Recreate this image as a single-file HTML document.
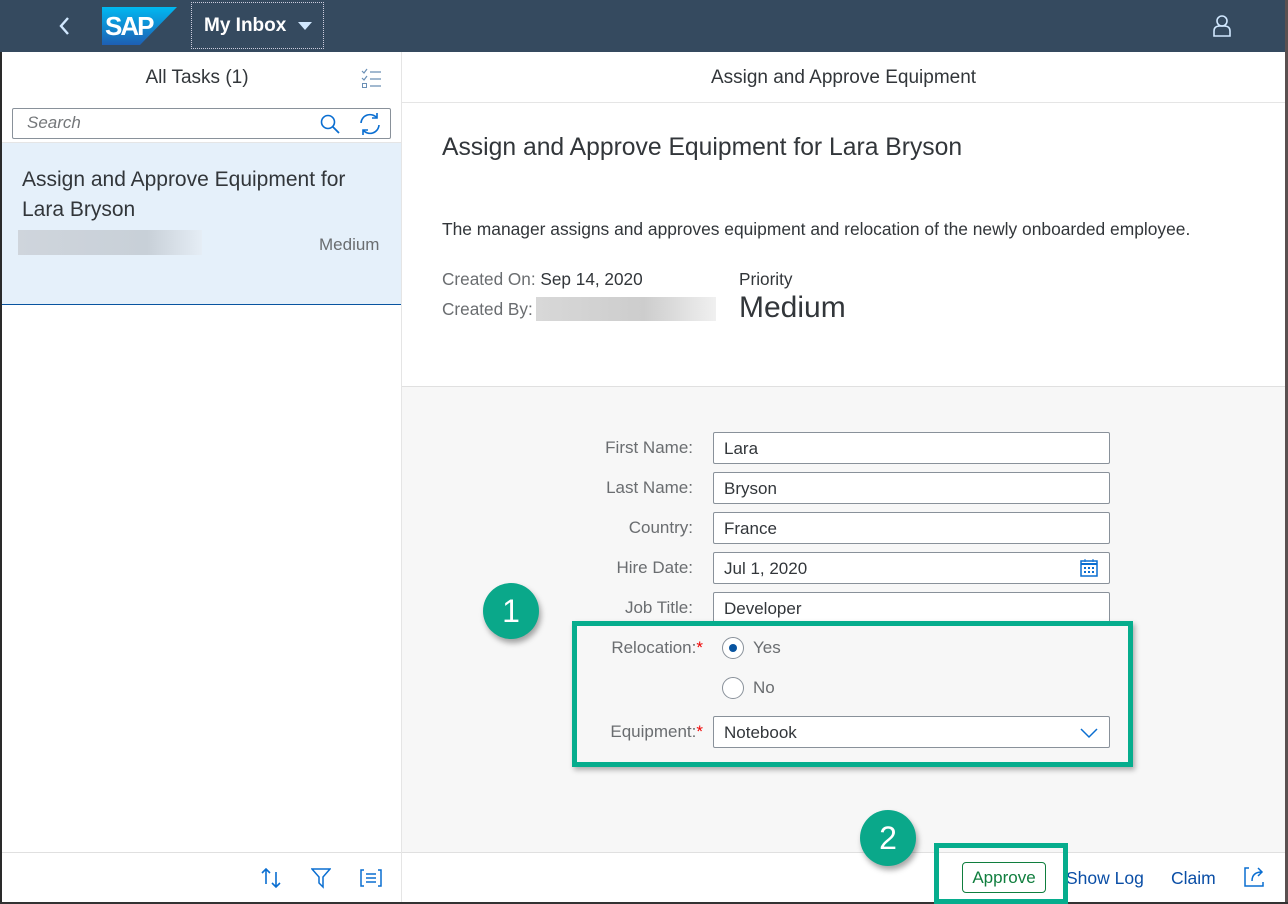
<!DOCTYPE html>
<html><head><meta charset="utf-8"><style>
*{margin:0;padding:0;box-sizing:border-box}
body{width:1288px;height:904px;overflow:hidden;position:relative;background:#fff;font-family:"Liberation Sans",Arial,sans-serif;color:#32363a}
.a{position:absolute}
.lbl{position:absolute;width:200px;text-align:right;font-size:17px;color:#6a6d70;left:493px}
.inp{position:absolute;left:713px;width:397px;height:32px;background:#fff;border:1px solid #89919a;border-radius:2px;font-size:17px;padding:6px 10px;color:#32363a}
.star{color:#e00;}
</style></head><body>
<div class="a" style="left:0;top:0;width:1288px;height:52px;background:#354a5f"></div>
<svg class="a" style="left:56px;top:15px" width="16" height="22"><path d="M12 3 L5 11 L12 19" stroke="#d1e8ff" stroke-width="2.4" fill="none"/></svg>
<svg class="a" style="left:102px;top:7px" width="75" height="38"><defs><linearGradient id="g" x1="0" y1="0" x2="0" y2="1"><stop offset="0" stop-color="#00b8f1"/><stop offset="1" stop-color="#1e5fb3"/></linearGradient></defs><path d="M0 0H75L38 38H0Z" fill="url(#g)"/><text x="3" y="28" font-family="Liberation Sans" font-weight="bold" font-size="26" fill="#fff" letter-spacing="-2">SAP</text></svg>
<div class="a" style="left:191px;top:2px;width:133px;height:47px;border:1px dotted #ccd;"></div>
<div class="a" style="left:204px;top:15px;font-size:19px;font-weight:bold;color:#fff">My Inbox</div>
<svg class="a" style="left:298px;top:22px" width="14" height="9"><path d="M0 0H14L7 8Z" fill="#d1e8ff"/></svg>
<svg class="a" style="left:1212px;top:14px" width="20" height="24"><circle cx="10" cy="7" r="5" stroke="#d1e8ff" stroke-width="1.6" fill="none"/><path d="M2 22V17Q2 12 8 12H12Q18 12 18 17V22Z" stroke="#d1e8ff" stroke-width="1.6" fill="none"/></svg>
<div class="a" style="left:0;top:52px;width:2px;height:852px;background:#2a2a2a"></div>
<div class="a" style="left:1285px;top:0;width:3px;height:904px;background:#5a5050"></div>
<div class="a" style="left:0;top:902px;width:1288px;height:2px;background:#333"></div>
<div class="a" style="left:401px;top:52px;width:1px;height:850px;background:#e5e5e5"></div>
<div class="a" style="left:2px;top:67px;width:390px;text-align:center;font-size:19px">All Tasks (1)</div>
<svg class="a" style="left:361px;top:68px" width="22" height="22"><path d="M1 3l2 2 3-4M1 10l2 2 3-4" stroke="#6a8fb5" fill="none" stroke-width="1.2"/><rect x="1.5" y="15.5" width="4" height="4" stroke="#6a8fb5" fill="none"/><path d="M9 4H20M9 11H20M9 18H20" stroke="#6a8fb5" stroke-width="1.2"/></svg>
<div class="a" style="left:12px;top:108px;width:379px;height:31px;border:1px solid #89919a;border-radius:2px;background:#fff"></div>
<div class="a" style="left:27px;top:113px;font-size:17px;font-style:italic;color:#74777a">Search</div>
<svg class="a" style="left:319px;top:113px" width="22" height="22"><circle cx="9" cy="9" r="6.5" stroke="#0a6ed1" stroke-width="1.6" fill="none"/><path d="M14 14L20 20" stroke="#0a6ed1" stroke-width="1.8"/></svg>
<svg class="a" style="left:358px;top:112px" width="24" height="24"><path d="M3 11A9 9 0 0 1 19 6M21 13A9 9 0 0 1 5 18" stroke="#0a6ed1" stroke-width="1.6" fill="none"/><path d="M19 1V6H14M5 23V18H10" stroke="#0a6ed1" stroke-width="1.6" fill="none"/></svg>
<div class="a" style="left:2px;top:142px;width:399px;height:1px;background:#e5e5e5"></div>
<div class="a" style="left:2px;top:143px;width:399px;height:162px;background:#e5f0fa;border-bottom:1px solid #0854a0"></div>
<div class="a" style="left:22px;top:165px;font-size:21px;line-height:30px;width:370px">Assign and Approve Equipment for Lara Bryson</div>
<div class="a" style="left:18px;top:230px;width:184px;height:25px;background:linear-gradient(90deg,#cfd5dc,#c8d0d8 70%,#e5edf5)"></div>
<div class="a" style="left:319px;top:235px;font-size:17px;color:#6a6d70">Medium</div>
<div class="a" style="left:2px;top:852px;width:399px;height:1px;background:#e0e0e0"></div>
<svg class="a" style="left:260px;top:866px" width="24" height="24"><path d="M6 18V3M2 7L6 3L10 7M16 6V21M12 17L16 21L20 17" stroke="#0a6ed1" stroke-width="1.6" fill="none"/></svg>
<svg class="a" style="left:311px;top:867px" width="20" height="22"><path d="M1 2H19L12 10V20L8 16V10Z" stroke="#0a6ed1" stroke-width="1.5" fill="none"/></svg>
<svg class="a" style="left:359px;top:868px" width="24" height="20"><path d="M5 2H2V18H5M19 2H22V18H19M7 6H17M7 10H17M7 14H17" stroke="#0a6ed1" stroke-width="1.5" fill="none"/></svg>
<div class="a" style="left:402px;top:67px;width:883px;text-align:center;font-size:19px">Assign and Approve Equipment</div>
<div class="a" style="left:402px;top:102px;width:883px;height:1px;background:#e5e5e5"></div>
<div class="a" style="left:442px;top:134px;font-size:24.7px">Assign and Approve Equipment for Lara Bryson</div>
<div class="a" style="left:442px;top:219px;font-size:17.4px">The manager assigns and approves equipment and relocation of the newly onboarded employee.</div>
<div class="a" style="left:442px;top:269px;font-size:17.2px"><span style="color:#6a6d70">Created On:</span> Sep 14, 2020</div>
<div class="a" style="left:442px;top:299px;font-size:17.2px;color:#6a6d70">Created By:</div>
<div class="a" style="left:536px;top:297px;width:180px;height:24px;background:linear-gradient(90deg,#d8d8d8,#cdcdcd 60%,#f0f0f0)"></div>
<div class="a" style="left:739px;top:269px;font-size:17.2px">Priority</div>
<div class="a" style="left:739px;top:291px;font-size:30px">Medium</div>
<div class="a" style="left:402px;top:386px;width:883px;height:466px;background:#f7f7f7;border-top:1px solid #e0e0e0"></div>
<div class="lbl" style="top:438px">First Name:</div><div class="inp" style="top:432px">Lara</div>
<div class="lbl" style="top:478px">Last Name:</div><div class="inp" style="top:472px">Bryson</div>
<div class="lbl" style="top:518px">Country:</div><div class="inp" style="top:512px">France</div>
<div class="lbl" style="top:558px">Hire Date:</div><div class="inp" style="top:552px">Jul 1, 2020</div>
<svg class="a" style="left:1079px;top:558px" width="20" height="20"><rect x="2" y="3" width="16" height="15" stroke="#0a6ed1" stroke-width="1.5" fill="none"/><path d="M2 6H18" stroke="#0a6ed1" stroke-width="2"/><path d="M6 1V4M14 1V4" stroke="#0a6ed1"/><g fill="#0a6ed1"><rect x="5" y="9" width="2" height="2"/><rect x="9" y="9" width="2" height="2"/><rect x="13" y="9" width="2" height="2"/><rect x="5" y="13" width="2" height="2"/><rect x="9" y="13" width="2" height="2"/><rect x="13" y="13" width="2" height="2"/></g></svg>
<div class="lbl" style="top:598px">Job Title:</div><div class="inp" style="top:592px">Developer</div>
<div class="lbl" style="top:638px;width:210px">Relocation:<span class="star">*</span></div>
<div class="a" style="left:722px;top:637px;width:22px;height:22px;border:1px solid #89919a;border-radius:50%;background:#fff"></div>
<div class="a" style="left:729px;top:644px;width:8px;height:8px;border-radius:50%;background:#0854a0"></div>
<div class="a" style="left:753px;top:638px;font-size:17px;color:#6a6d70">Yes</div>
<div class="a" style="left:722px;top:677px;width:22px;height:22px;border:1px solid #89919a;border-radius:50%;background:#fff"></div>
<div class="a" style="left:753px;top:678px;font-size:17px;color:#6a6d70">No</div>
<div class="lbl" style="top:722px;width:210px">Equipment:<span class="star">*</span></div><div class="inp" style="top:716px">Notebook</div>
<svg class="a" style="left:1080px;top:727px" width="18" height="12"><path d="M1 2L9 10L17 2" stroke="#0a6ed1" stroke-width="1.5" fill="none"/></svg>
<div class="a" style="left:572px;top:621px;width:561px;height:146px;border:5px solid #06ad8d;box-shadow:2px 3px 5px rgba(0,0,0,.3)"></div>
<div class="a" style="left:483px;top:583px;width:56px;height:56px;border-radius:50%;background:#0aa88a;color:#fff;font-size:32px;text-align:center;line-height:56px;box-shadow:2px 4px 6px rgba(0,0,0,.35)">1</div>
<div class="a" style="left:402px;top:852px;width:883px;height:1px;background:#e0e0e0"></div>
<div class="a" style="left:962px;top:862px;width:84px;height:31px;border:1px solid #107e3e;border-radius:4px;color:#107e3e;font-size:17px;text-align:center;line-height:29px;background:#fff">Approve</div>
<div class="a" style="left:1066px;top:868px;font-size:17.5px;color:#0a4ea6">Show Log</div>
<div class="a" style="left:1171px;top:868px;font-size:17.5px;color:#0a4ea6">Claim</div>
<svg class="a" style="left:1243px;top:865px" width="24" height="24"><path d="M6 3H2V21H20V17" stroke="#0a6ed1" stroke-width="1.5" fill="none"/><path d="M9 16Q9 7 19 7M15 3L19 7L15 11" stroke="#0a6ed1" stroke-width="1.5" fill="none"/></svg>
<div class="a" style="left:934px;top:843px;width:134px;height:61px;border:5px solid #06ad8d"></div>
<div class="a" style="left:860px;top:810px;width:56px;height:56px;border-radius:50%;background:#0aa88a;color:#fff;font-size:32px;text-align:center;line-height:56px;box-shadow:2px 4px 6px rgba(0,0,0,.35)">2</div>
</body></html>
